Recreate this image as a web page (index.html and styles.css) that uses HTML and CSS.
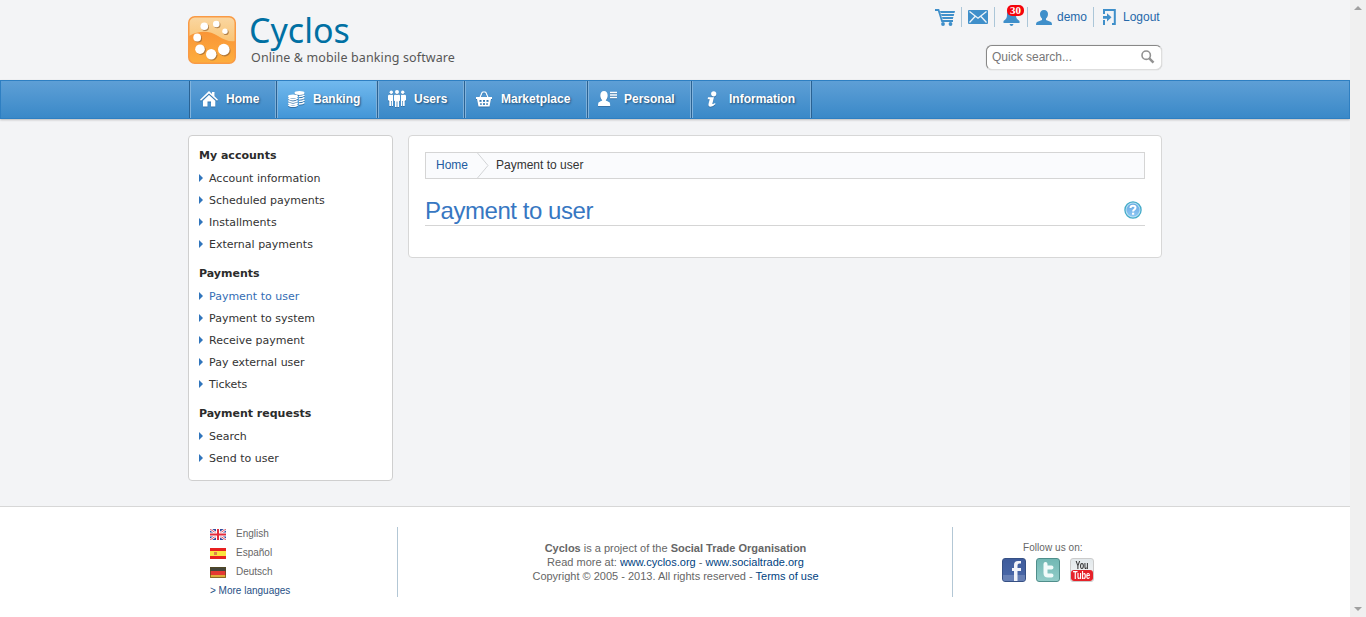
FILE: index.html
```html
<!DOCTYPE html>
<html lang="en">
<head>
<meta charset="utf-8">
<title>Cyclos</title>
<link rel="stylesheet" href="styles.css">
</head>
<body>
<div class="page">
  <header class="header wrap">
    <div class="brand">
      <svg class="logo" width="48" height="48" viewBox="0 0 48 48">
        <defs>
          <linearGradient id="lg1" x1="0" y1="0" x2="0" y2="1"><stop offset="0" stop-color="#fad7a2"/><stop offset="1" stop-color="#f8b44f"/></linearGradient>
          <linearGradient id="lg2" x1="0" y1="0" x2="0" y2="1"><stop offset="0" stop-color="#f99537"/><stop offset="1" stop-color="#fdae3e"/></linearGradient>
        </defs>
        <rect x=".75" y=".75" width="46.500" height="46.500" rx="6" fill="url(#lg1)"/>
        <path d="M1 20C12 14 22 15 30 20C36 24 42 26 47 25V41Q47 47 41 47H7Q1 47 1 41Z" fill="url(#lg2)"/>
        <rect x=".75" y=".75" width="46.500" height="46.500" rx="6" fill="none" stroke="#f99a45" stroke-width="1.500"/>
        <g fill="#9c6a35" opacity=".75"><circle cx="17.200" cy="11.200" r="3.800"/><circle cx="29.200" cy="9" r="3.300"/><circle cx="37.900" cy="16.200" r="2.800"/><circle cx="10.200" cy="22.500" r="3.900"/><circle cx="13" cy="34.200" r="4.800"/><circle cx="24.200" cy="39.300" r="5.200"/><circle cx="36.800" cy="34.700" r="5.800"/></g>
        <g fill="#fff"><circle cx="16.300" cy="10.200" r="3.800"/><circle cx="28.300" cy="8" r="3.300"/><circle cx="37" cy="15.200" r="2.700"/><circle cx="9.200" cy="21.500" r="3.900"/><circle cx="12" cy="33.200" r="4.800"/><circle cx="23.200" cy="38.300" r="5.200"/><circle cx="35.800" cy="33.500" r="5.800"/></g>
      </svg>
      <div class="brand-text">
        <div class="brand-name">Cyclos</div>
        <div class="brand-tag">Online &amp; mobile banking software</div>
      </div>
    </div>
    <div class="tools">
      <div class="tool-row">
        <span class="tool cart"><svg width="21" height="17" viewBox="0 0 21 17"><path d="M0 1H3.500L7 12H18" fill="none" stroke="#3f8fca" stroke-width="1.800"/><path d="M5 2H20L19.500 4H5.600ZM6 5H19.200L18.700 7H6.600ZM7 8H18.400L17.800 10H7.500Z" fill="#3f8fca"/><circle cx="8" cy="15" r="1.900" fill="#3f8fca"/><circle cx="15.500" cy="15" r="1.900" fill="#3f8fca"/></svg></span>
        <span class="tool mail"><svg width="20" height="14" viewBox="0 0 20 14"><rect width="20" height="14" rx="1" fill="#3f8fca"/><path d="M1.500 1.500L10 8.200L18.500 1.500M1.500 12.500L7 6.500M18.500 12.500L13 6.500" fill="none" stroke="#eef4f9" stroke-width="1.300"/></svg></span>
        <span class="tool bell"><svg width="17" height="18" viewBox="0 0 17 18"><path d="M8.500 1C12 1 13 4 13 7C13 10 14 11.500 16.500 13V15H.5V13C3 11.500 4 10 4 7C4 4 5 1 8.500 1ZM6.500 16H10.500Q10 18 8.500 18Q7 18 6.500 16Z" fill="#3f8fca"/></svg><b class="badge">30</b></span>
        <a class="tool user"><svg width="16" height="15" viewBox="0 0 16 15"><path d="M8 0C10.600 0 12 1.700 12 4C12 6 11 7.600 10 8.600V10L15 12Q16 12.500 16 15H0Q0 12.500 1 12L6 10V8.600C5 7.600 4 6 4 4C4 1.700 5.400 0 8 0Z" fill="#3f8fca"/></svg><span>demo</span></a>
        <a class="tool out"><svg width="14" height="16" viewBox="0 0 14 16"><path d="M2 5V1H12.800V15H10M2 11V16" fill="none" stroke="#3f8fca" stroke-width="2"/><path d="M1 7H5V4.200L9.500 8.300L5 12.500V9.700H1Z" fill="#3f8fca"/></svg><span>Logout</span></a>
      </div>
      <div class="search"><span>Quick search...</span><svg width="14" height="14" viewBox="0 0 14 14"><circle cx="5.200" cy="5.200" r="4.200" fill="none" stroke="#929292" stroke-width="1.600"/><path d="M8.300 8.300L12.500 12.700" stroke="#929292" stroke-width="2.400"/></svg></div>
    </div>
  </header>

  <nav class="nav">
    <div class="menu wrap">
      <a class="item home"><svg width="18" height="16" viewBox="0 0 18 16"><path d="M9 0L12 3V1H14.500V5.300L18 8.700L17 9.800L9 2.600L1 9.800L0 8.700ZM9 4L15.300 9.700V15.500H11V10.500H7.500V15.500H3V9.700Z" fill="#fff"/></svg>Home</a>
      <a class="item banking active"><svg width="17" height="16" viewBox="0 0 17 16"><g fill="#fff"><ellipse cx="11.500" cy="2" rx="5" ry="1.900"/><ellipse cx="5" cy="5.500" rx="5" ry="1.900"/></g><g fill="none" stroke="#fff" stroke-width="1.500"><path d="M11 5.500Q15 5.500 16.400 4M11 8Q15 8 16.400 6.500M11 10.500Q15 10.500 16.400 9M11 13Q15 13 16.400 11.500M.3 7.200Q5 10.300 9.700 7.200M.3 9.600Q5 12.700 9.700 9.600M.3 12Q5 15 9.700 12M.3 14Q5 17 9.700 14"/></g></svg>Banking</a>
      <a class="item users"><svg width="18" height="17" viewBox="0 0 18 17"><g fill="#fff"><circle cx="3.300" cy="2.300" r="1.700"/><circle cx="9" cy="2" r="2"/><circle cx="14.700" cy="2.300" r="1.700"/><path d="M0 6Q0 4.700 1.500 4.700H4.500Q5 4.700 5 5.500V16H3.700V11H3V16H1.300V11L0 10ZM6 6Q6 4.700 7.200 4.700H10.800Q12 4.700 12 6V10.500L11 11.500V17H9.400V11.500H8.600V17H7V11.500L6 10.500ZM18 6Q18 4.700 16.500 4.700H13.500Q13 4.700 13 5.500V16H14.300V11H15V16H16.700V11L18 10Z"/></g></svg>Users</a>
      <a class="item market"><svg width="16" height="16" viewBox="0 0 16 16"><path d="M4 6.500L6 1.700Q6.300 1 7 1H9Q9.700 1 10 1.700L12 6.500" fill="none" stroke="#fff" stroke-width="1.200"/><path fill-rule="evenodd" d="M0 6H16V8H15L13.500 15.500H2.500L1 8H0ZM3.500 9V11H5.500V9ZM7 9V11H9V9ZM10.500 9V11H12.500V9ZM4.200 12.200V14H5.700V12.200ZM7 12.200V14H9V12.200ZM10.300 12.200V14H11.800V12.200Z" fill="#fff"/></svg>Marketplace</a>
      <a class="item personal"><svg width="20" height="15" viewBox="0 0 20 15"><path d="M6 0C8.300 0 9.700 1.800 9.700 4.500C9.700 6.700 8.800 8.300 7.700 9.200C8 10 11 10.500 11.700 11.500Q12.200 12.500 12.200 15H0Q0 12.500 .5 11.500C1.200 10.500 4 10 4.300 9.200C3.200 8.300 2.300 6.700 2.300 4.500C2.300 1.800 3.700 0 6 0Z" fill="#fff"/><path d="M12 1.500H19M12 4H19M12 6.500H19" stroke="#fff" stroke-width="1.500"/></svg>Personal</a>
      <a class="item info"><svg width="10" height="16" viewBox="0 0 10 16"><circle cx="6.700" cy="2.800" r="2.600" fill="#fff"/><path d="M1 6.300H7L5.300 13Q6.500 13.300 8 12L8.500 13Q6 15.700 3.500 15.700Q1 15.500 1.500 13L2.700 8.200H.7Z" fill="#fff"/></svg>Information</a>
    </div>
  </nav>

  <main class="content wrap">
    <aside class="side">
      <h3>My accounts</h3>
      <ul><li>Account information</li><li>Scheduled payments</li><li>Installments</li><li>External payments</li></ul>
      <h3>Payments</h3>
      <ul><li class="current">Payment to user</li><li>Payment to system</li><li>Receive payment</li><li>Pay external user</li><li>Tickets</li></ul>
      <h3>Payment requests</h3>
      <ul><li>Search</li><li>Send to user</li></ul>
    </aside>
    <section class="panel">
      <div class="crumbs"><a>Home</a><svg width="12" height="25" viewBox="0 0 12 25"><path d="M.5 0L11 12.500L.5 25" fill="none" stroke="#d2d4d6"/></svg><span>Payment to user</span></div>
      <div class="title">
        <h1>Payment to user</h1>
        <svg width="18" height="18" viewBox="0 0 18 18"><defs><linearGradient id="hg" x1="0" y1="0" x2="0" y2="1"><stop offset="0" stop-color="#68a9e2"/><stop offset="1" stop-color="#8cc6f3"/></linearGradient></defs><circle cx="9" cy="9" r="8.100" fill="#b9e1f4" stroke="#45abc9" stroke-width="1.300"/><circle cx="9" cy="9" r="6.500" fill="url(#hg)"/><path d="M6.500 7Q6.500 4.800 9 4.800Q11.500 4.800 11.500 6.800Q11.500 8 10 8.800Q9.100 9.300 9.100 10.500" fill="none" stroke="#fff" stroke-width="2"/><rect x="8" y="11.700" width="2.200" height="2" fill="#fff"/></svg>
      </div>
    </section>
  </main>

  <footer class="footer">
    <div class="foot wrap">
      <div class="langs">
        <div class="lang"><svg width="16" height="11" viewBox="0 0 16 11"><path fill="#324a9d" d="M0 0H16V11H0Z"/><path d="M0 0L16 11M16 0L0 11" stroke="#fff" stroke-width="2.400"/><path d="M0 0L16 11M16 0L0 11" stroke="#df4355" stroke-width=".9"/><path d="M8 0V11M0 5.500H16" stroke="#fff" stroke-width="4"/><path d="M8 0V11M0 5.500H16" stroke="#e32c3d" stroke-width="2"/></svg>English</div>
        <div class="lang"><svg width="16" height="11" viewBox="0 0 16 11"><path fill="#e82020" d="M0 0H16V11H0Z"/><path fill="#fbe33d" d="M0 3H16V8H0Z"/><rect x="4" y="4" width="3" height="3" fill="#d98348"/></svg>Español</div>
        <div class="lang"><svg width="16" height="11" viewBox="0 0 16 11"><path fill="#44453a" d="M0 0H16V4H0Z"/><path fill="#e43832" d="M0 4H16V8H0Z"/><path fill="#dfac3c" d="M0 8H16V11H0Z"/><path d="M.5 .5H15.500V10.500H.5Z" fill="none" stroke="#584818" opacity=".65"/></svg>Deutsch</div>
        <a class="more">&gt; More languages</a>
      </div>
      <div class="about">
        <p><b>Cyclos</b> is a project of the <b>Social Trade Organisation</b></p>
        <p>Read more at: <a>www.cyclos.org</a> - <a>www.socialtrade.org</a></p>
        <p>Copyright © 2005 - 2013. All rights reserved - <a>Terms of use</a></p>
      </div>
      <div class="follow">
        <div class="follow-label">Follow us on:</div>
        <div class="socials">
          <span class="social facebook"><svg width="22" height="22" viewBox="0 0 22 22"><path d="M0 16H22V22H0Z" fill="#6780b5"/><path d="M18 4.500H16.300Q14.500 4.500 14.500 6.500V9H18V12H14.500V22H11V12H9V9H11V6Q11 2 15 2H18Z" fill="#f2f4f9"/></svg></span>
          <span class="social twitter"><svg width="22" height="22" viewBox="0 0 22 22"><path d="M8.500 5V14Q8.500 16.500 11 16.500H14.500M8.500 8.500H14.500" fill="none" stroke="#f1fbfa" stroke-width="4" stroke-linecap="round"/></svg></span>
          <span class="social youtube"><span class="you"><span>You</span></span><span class="tube"><span>Tube</span></span></span>
        </div>
      </div>
    </div>
  </footer>
</div>
<div class="scrollbar"><i class="up"></i><i class="down"></i></div>
</body>
</html>
```
FILE: styles.css
```css
* { box-sizing: border-box; }
body { margin: 0; height: 617px; overflow: hidden; display: flex; background: #f3f4f6; font: 12px/14px "Liberation Sans", Arial, sans-serif; color: #333; }
svg { display: block; flex: none; }
.page { width: 1350px; height: 617px; display: flex; flex-direction: column; }
.wrap { width: 974px; margin: 0 auto; }

.header { height: 80px; display: flex; justify-content: space-between; }
.brand { display: flex; padding-top: 16px; }
.brand-text { margin-left: 13px; }
.brand-name { font: 34px/34px "Noto Sans", sans-serif; letter-spacing: 0; color: #0070a3; margin-top: -3px; }
.brand-tag { font: 12.5px/16px "Noto Sans", sans-serif; color: #575757; margin: 3px 0 0 2px; white-space: nowrap; letter-spacing: 0.12px; }
.tools { display: flex; flex-direction: column; align-items: flex-end; padding-top: 7px; }
.tool-row { display: flex; height: 20px; }
.tool { display: flex; align-items: center; position: relative; border-left: 1px solid #abc6d8; color: #2568aa; }
.tool.cart { border-left: 0; width: 26px; }
.tool.mail { width: 33px; padding-left: 6px; }
.tool.bell { width: 33px; padding-left: 8px; }
.tool.user { width: 66px; padding-left: 8px; gap: 5px; }
.tool.out { width: 69px; padding-left: 8px; gap: 7px; }
.badge { position: absolute; left: 12px; top: -2px; width: 17px; height: 11px; border-radius: 5px; background: #f5040c; color: #fff; font: bold 11px/11px "Liberation Serif", serif; text-align: center; }
.search { width: 176px; height: 25px; margin: 18px 0 0; background: #fff; border: 1px solid #dedede; border-top: 1px solid #888; border-left: 1px solid #888; border-radius: 6px; box-shadow: 0 0 1px #aaa; display: flex; align-items: center; justify-content: space-between; padding: 0 6px 2px 5px; color: #777; }

.nav { height: 39px; flex: none; border: 1px solid #2e7fc2; background: linear-gradient(#5e9fd6, #3a89c8); box-shadow: 0 1px 2px #bbb; }
.menu { display: flex; height: 37px; padding-left: 1px; }
.item { height: 37px; display: flex; align-items: center; color: #fff; font-weight: bold; text-shadow: 1px 1px 2px #234d73; border-right: 1px solid #2a6293; box-shadow: inset 1px 0 #80b3dd, inset -1px 0 #7dafd8; padding-bottom: 2px; }
.item svg { filter: drop-shadow(0 1px 0 #3673a8); }
.home { width: 88px; padding-left: 10px; gap: 8px; border-left: 1px solid #2a6293; }
.banking { width: 101px; padding-left: 11px; gap: 8px; }
.users { width: 87px; padding-left: 10px; gap: 8px; }
.market { width: 123px; padding-left: 11px; gap: 9px; }
.personal { width: 104px; padding-left: 10px; gap: 6px; }
.info { width: 120px; padding-left: 15px; gap: 12px; }
.active { background: linear-gradient(#71b9ee, #4396d7); }

.content { display: flex; align-items: flex-start; gap: 15px; padding-top: 16px; height: 387px; flex: none; }
.side { width: 205px; height: 346px; background: #fff; border: 1px solid #cfcfcf; border-radius: 4px; padding: 9px 10px; font: 11px/22px "DejaVu Sans", Verdana, sans-serif; }
.side h3 { margin: 0; font-size: 11px; line-height: 22px; height: 23px; color: #2b2b2b; }
.side ul { list-style: none; margin: 0 0 7px; padding: 0; }
.side li { height: 22px; display: flex; align-items: center; }
.side li::before { content: ""; border-left: 4px solid #3075bc; border-top: 4px solid transparent; border-bottom: 4px solid transparent; margin: 0 6px 2px 0; }
.side .current { color: #346db4; }
.panel { width: 754px; height: 123px; background: #fff; border: 1px solid #d7d7d7; border-radius: 4px; padding: 16px; }
.crumbs { height: 27px; border: 1px solid #d5d5d5; background: #fafbfd; padding-left: 10px; display: flex; align-items: center; color: #333; }
.crumbs a { color: #235ba0; }
.crumbs a, .crumbs span { padding-bottom: 2px; }
.crumbs svg { margin: 0 7px 0 9px; }
.title { height: 47px; border-bottom: 1px solid #d5d5d5; display: flex; justify-content: space-between; padding: 18px 3px 0 0; }
.title h1 { margin: 0; font-size: 24px; line-height: 27px; font-weight: normal; letter-spacing: -0.45px; color: #3777c2; }
.title svg { margin-top: 4px; }

.footer { flex: 1; background: #fff; border-top: 1px solid #d7d7d7; padding-top: 20px; }
.foot { display: grid; grid-template-columns: 210px 555px 209px; height: 70px; color: #666; }
.foot a { color: #003f7f; }
.langs { border-right: 1px solid #b3c7d5; padding-left: 22px; font-size: 10px; line-height: 14px; }
.lang { height: 19px; display: flex; align-items: center; gap: 10px; }
.lang svg { margin-top: 1px; }
.lang:first-child { height: 14px; margin-bottom: 2px; }
.lang:nth-child(3) { margin-bottom: 3px; }
.langs .more { display: block; color: #264f85; height: 13px; }
.about { border-right: 1px solid #b3c7d5; text-align: center; font-size: 11px; padding: 14px 0 0 1px; }
.about p { margin: 0; }
.follow { padding-top: 14px; font-size: 10px; }
.follow-label { margin-left: 70px; letter-spacing: 0.05px; }
.socials { display: flex; gap: 10px; margin: 3px 0 0 49px; }
.social { width: 24px; height: 24px; border-radius: 3px; overflow: hidden; border: 1px solid #365084; background: linear-gradient(#3e5c9c, #4b69a9); }
.twitter { border-color: #508e8b; background: linear-gradient(#72b8b4, #91ccc8); }
.youtube { border-color: #ccc; background: linear-gradient(#e2e8eb, #f7f7f7); }
.you, .tube { display: flex; justify-content: center; height: 11px; font: bold 11px/12px "Liberation Sans", sans-serif; color: #333; }
.you span { transform: scaleX(0.65); }
.tube { color: #fff; background: #e62229; font-size: 10px; line-height: 11px; border-radius: 3px; }
.tube span { transform: scaleX(0.75); }

.scrollbar { width: 16px; background: #f0f0f0; display: flex; flex-direction: column; justify-content: space-between; align-items: center; padding: 6px 0; }
.scrollbar i { border: 4px solid transparent; }
.scrollbar .up { border-top: 0; border-bottom-color: #a0a0a0; }
.scrollbar .down { border-bottom: 0; border-top-color: #a0a0a0; }
```
